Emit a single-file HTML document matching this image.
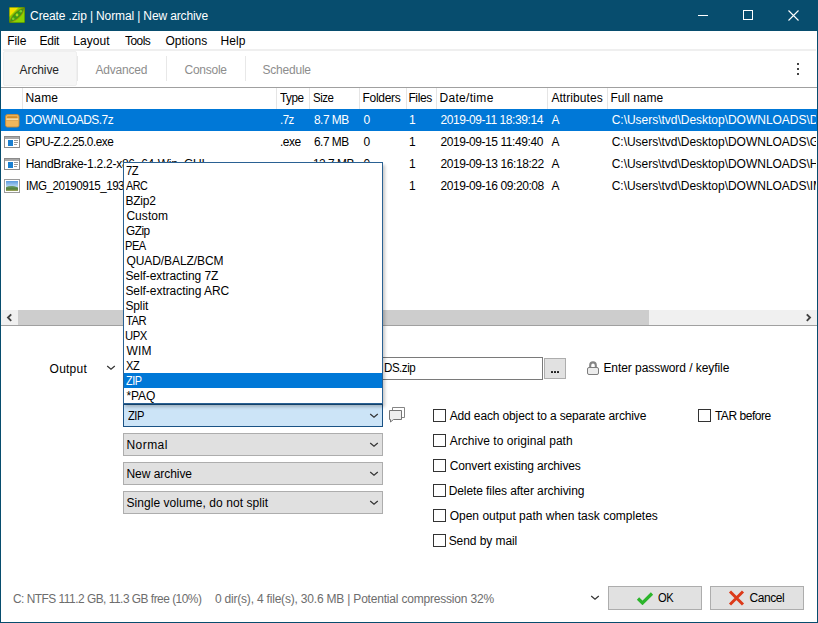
<!DOCTYPE html>
<html><head><meta charset="utf-8">
<style>
*{margin:0;padding:0;box-sizing:border-box}
html,body{width:818px;height:623px;overflow:hidden;background:#fff}
body{position:relative;font-family:"Liberation Sans",sans-serif;font-size:12px;color:#000}
.a{position:absolute;white-space:pre;line-height:14px}
.bx{position:absolute}
</style></head><body>
<div class="bx" style="left:0;top:0;width:818px;height:31px;background:#074d6e"></div>
<div class="bx" style="left:0;top:0;width:1px;height:623px;background:#074d6e"></div>
<div class="bx" style="left:817px;top:0;width:1px;height:623px;background:#074d6e"></div>
<div class="bx" style="left:0;top:622px;width:818px;height:1px;background:#074d6e"></div>
<svg class="bx" style="left:9px;top:7px" width="16" height="16" viewBox="0 0 16 16">
 <rect x="0" y="0" width="16" height="16" fill="#8ad400"/>
 <path d="M0 0H10L0 10Z" fill="#f4e000"/>
 <path d="M0.5 15.5C2 9 7 3 15.5 0.5C14 8 8.5 13.5 0.5 15.5Z" fill="#3d9c12" stroke="#a8780c" stroke-width="0.7"/>
 <circle cx="4.2" cy="11.8" r="1.3" fill="#82cc2a"/><circle cx="8" cy="8" r="1.4" fill="#b2d820"/><circle cx="11.8" cy="4.2" r="1.3" fill="#82cc2a"/>
 <rect x="0.25" y="0.25" width="15.5" height="15.5" fill="none" stroke="#2f6a10" stroke-width="0.5"/>
</svg>
<div class="a" style="left:30.10px;top:9px;letter-spacing:-0.130px;color:#fff">Create .zip | Normal | New archive</div>
<div class="bx" style="left:698px;top:15px;width:10px;height:1px;background:#fff"></div>
<div class="bx" style="left:743px;top:10px;width:10px;height:10px;border:1px solid #fff"></div>
<svg class="bx" style="left:788px;top:10px" width="11" height="11" viewBox="0 0 11 11"><path d="M0.5 0.5L10.5 10.5M10.5 0.5L0.5 10.5" stroke="#fff" stroke-width="1.1"/></svg>
<div class="a" style="left:7.20px;top:34px;letter-spacing:-0.067px;">File</div>
<div class="a" style="left:39.50px;top:34px;letter-spacing:-0.267px;">Edit</div>
<div class="a" style="left:73.30px;top:34px;letter-spacing:0.040px;">Layout</div>
<div class="a" style="left:124.80px;top:34px;letter-spacing:-0.500px;transform:scaleX(0.9923);transform-origin:0 0;">Tools</div>
<div class="a" style="left:165.40px;top:34px;letter-spacing:0.067px;">Options</div>
<div class="a" style="left:220.50px;top:34px;letter-spacing:0.067px;">Help</div>
<div class="bx" style="left:3px;top:49px;width:813px;height:2px;background:#efefef"></div>
<div class="bx" style="left:3px;top:51px;width:74px;height:35px;background:#f6f6f6;border:1px solid #efefef;border-radius:2px"></div>
<div class="bx" style="left:77px;top:56px;width:1px;height:25px;background:#e8e8e8"></div>
<div class="bx" style="left:166px;top:56px;width:1px;height:25px;background:#e8e8e8"></div>
<div class="bx" style="left:245px;top:56px;width:1px;height:25px;background:#e8e8e8"></div>
<div class="a" style="left:19.60px;top:63px;letter-spacing:-0.100px;color:#262626">Archive</div>
<div class="a" style="left:95.50px;top:63px;letter-spacing:-0.214px;color:#8d8d8d">Advanced</div>
<div class="a" style="left:184.50px;top:63px;letter-spacing:-0.250px;color:#8d8d8d">Console</div>
<div class="a" style="left:262.40px;top:63px;letter-spacing:-0.200px;color:#8d8d8d">Schedule</div>
<div class="bx" style="left:797px;top:63px;width:2px;height:2px;background:#444"></div>
<div class="bx" style="left:797px;top:68px;width:2px;height:2px;background:#444"></div>
<div class="bx" style="left:797px;top:73px;width:2px;height:2px;background:#444"></div>
<div class="bx" style="left:1px;top:87px;width:816px;height:1px;background:#a0a0a0"></div>
<div class="bx" style="left:22px;top:88px;width:1px;height:21px;background:#e5e5e5"></div><div class="bx" style="left:276px;top:88px;width:1px;height:21px;background:#e5e5e5"></div><div class="bx" style="left:309px;top:88px;width:1px;height:21px;background:#e5e5e5"></div><div class="bx" style="left:359px;top:88px;width:1px;height:21px;background:#e5e5e5"></div><div class="bx" style="left:406px;top:88px;width:1px;height:21px;background:#e5e5e5"></div><div class="bx" style="left:436px;top:88px;width:1px;height:21px;background:#e5e5e5"></div><div class="bx" style="left:547px;top:88px;width:1px;height:21px;background:#e5e5e5"></div><div class="bx" style="left:607px;top:88px;width:1px;height:21px;background:#e5e5e5"></div>
<div class="a" style="left:25.40px;top:91px;letter-spacing:0.200px;">Name</div>
<div class="a" style="left:280.30px;top:91px;letter-spacing:-0.500px;transform:scaleX(0.9755);transform-origin:0 0;">Type</div>
<div class="a" style="left:312.54px;top:91px;letter-spacing:-0.500px;transform:scaleX(0.9561);transform-origin:0 0;">Size</div>
<div class="a" style="left:362.60px;top:91px;letter-spacing:-0.300px;">Folders</div>
<div class="a" style="left:408.40px;top:91px;letter-spacing:-0.375px;">Files</div>
<div class="a" style="left:439.40px;top:91px;letter-spacing:0.325px;">Date/time</div>
<div class="a" style="left:551.40px;top:91px;letter-spacing:0.067px;">Attributes</div>
<div class="a" style="left:610.50px;top:91px;letter-spacing:0.000px;">Full name</div>
<div class="bx" style="left:1px;top:109px;width:816px;height:22px;background:#0078d7"></div>
<div class="bx" style="left:1px;top:109px;width:275px;height:88px;overflow:hidden"><div class="bx" style="left:-1px;top:0;width:818px;height:88px"><div class="a" style="left:25.41px;top:4px;letter-spacing:-0.500px;transform:scaleX(0.9944);transform-origin:0 0;color:#fff">DOWNLOADS.7z</div><div class="a" style="left:26.40px;top:26px;letter-spacing:-0.500px;transform:scaleX(0.9832);transform-origin:0 0;">GPU-Z.2.25.0.exe</div><div class="a" style="left:25.70px;top:48px;letter-spacing:-0.263px;">HandBrake-1.2.2-x86_64-Win_GUI</div><div class="a" style="left:25.73px;top:70px;letter-spacing:-0.500px;transform:scaleX(0.9670);transform-origin:0 0;">IMG_20190915_193000.jpg</div></div></div><div class="bx" style="left:276px;top:109px;width:33px;height:88px;overflow:hidden"><div class="bx" style="left:-276px;top:0;width:818px;height:88px"><div class="a" style="left:280.04px;top:4px;letter-spacing:-0.500px;transform:scaleX(0.9571);transform-origin:0 0;color:#fff">.7z</div><div class="a" style="left:279.80px;top:26px;letter-spacing:-0.500px;transform:scaleX(0.9951);transform-origin:0 0;">.exe</div><div class="a" style="left:280.80px;top:48px;letter-spacing:-0.500px;transform:scaleX(0.9951);transform-origin:0 0;"></div><div class="a" style="left:279.80px;top:70px;letter-spacing:-0.500px;transform:scaleX(0.9951);transform-origin:0 0;">.jpg</div></div></div><div class="bx" style="left:309px;top:109px;width:50px;height:88px;overflow:hidden"><div class="bx" style="left:-309px;top:0;width:818px;height:88px"><div class="a" style="left:313.50px;top:4px;letter-spacing:-0.500px;transform:scaleX(0.9915);transform-origin:0 0;color:#fff">8.7 MB</div><div class="a" style="left:313.50px;top:26px;letter-spacing:-0.500px;transform:scaleX(0.9915);transform-origin:0 0;">6.7 MB</div><div class="a" style="left:312.51px;top:48px;letter-spacing:-0.500px;transform:scaleX(0.9915);transform-origin:0 0;">12.7 MB</div><div class="a" style="left:313.50px;top:70px;letter-spacing:-0.500px;transform:scaleX(0.9915);transform-origin:0 0;">2.5 MB</div></div></div><div class="bx" style="left:359px;top:109px;width:47px;height:88px;overflow:hidden"><div class="bx" style="left:-359px;top:0;width:818px;height:88px"><div class="a" style="left:363.60px;top:4px;letter-spacing:0.000px;color:#fff">0</div><div class="a" style="left:363.60px;top:26px;letter-spacing:0.000px;">0</div><div class="a" style="left:363.60px;top:48px;letter-spacing:0.000px;">0</div><div class="a" style="left:363.60px;top:70px;letter-spacing:0.000px;">0</div></div></div><div class="bx" style="left:406px;top:109px;width:30px;height:88px;overflow:hidden"><div class="bx" style="left:-406px;top:0;width:818px;height:88px"><div class="a" style="left:409.00px;top:4px;letter-spacing:0.000px;color:#fff">1</div><div class="a" style="left:409.00px;top:26px;letter-spacing:0.000px;">1</div><div class="a" style="left:409.00px;top:48px;letter-spacing:0.000px;">1</div><div class="a" style="left:409.00px;top:70px;letter-spacing:0.000px;">1</div></div></div><div class="bx" style="left:436px;top:109px;width:111px;height:88px;overflow:hidden"><div class="bx" style="left:-436px;top:0;width:818px;height:88px"><div class="a" style="left:440.40px;top:4px;letter-spacing:-0.422px;color:#fff">2019-09-11 18:39:14</div><div class="a" style="left:440.40px;top:26px;letter-spacing:-0.422px;">2019-09-15 11:49:40</div><div class="a" style="left:440.40px;top:48px;letter-spacing:-0.422px;">2019-09-13 16:18:22</div><div class="a" style="left:440.40px;top:70px;letter-spacing:-0.422px;">2019-09-16 09:20:08</div></div></div><div class="bx" style="left:547px;top:109px;width:60px;height:88px;overflow:hidden"><div class="bx" style="left:-547px;top:0;width:818px;height:88px"><div class="a" style="left:551.60px;top:4px;letter-spacing:0.000px;color:#fff">A</div><div class="a" style="left:551.60px;top:26px;letter-spacing:0.000px;">A</div><div class="a" style="left:551.60px;top:48px;letter-spacing:0.000px;">A</div><div class="a" style="left:551.60px;top:70px;letter-spacing:0.000px;">A</div></div></div><div class="bx" style="left:607px;top:109px;width:209px;height:88px;overflow:hidden"><div class="bx" style="left:-607px;top:0;width:818px;height:88px"><div class="a" style="left:611.70px;top:4px;letter-spacing:-0.020px;color:#fff">C:\Users\tvd\Desktop\DOWNLOADS\DOWNLOADS.7z</div><div class="a" style="left:611.70px;top:26px;letter-spacing:-0.020px;">C:\Users\tvd\Desktop\DOWNLOADS\GPU-Z.2.25.0.exe</div><div class="a" style="left:611.70px;top:48px;letter-spacing:-0.020px;">C:\Users\tvd\Desktop\DOWNLOADS\HandBrake-1.2.2-x86_64-Win_GUI.exe</div><div class="a" style="left:611.70px;top:70px;letter-spacing:-0.020px;">C:\Users\tvd\Desktop\DOWNLOADS\IMG_20190915_193000.jpg</div></div></div>
<svg class="bx" style="left:4px;top:113px" width="16" height="15" viewBox="0 0 16 15">
 <rect x="1.6" y="1.6" width="13.4" height="12.4" rx="1.8" fill="#f1b75c" stroke="#c98a34" stroke-width="0.9"/>
 <rect x="3" y="3.2" width="10.5" height="2.2" rx="1" fill="#cf8c2c"/>
 <rect x="2.4" y="5.4" width="11.8" height="1.8" fill="#f7dba6"/>
 <rect x="2.2" y="7.3" width="12.2" height="0.7" fill="#d9a14e"/>
</svg>
<svg class="bx" style="left:4px;top:136px" width="16" height="12" viewBox="0 0 16 12">
 <rect x="0.5" y="0.5" width="15" height="11" fill="#fff" stroke="#8a8a8a"/>
 <rect x="1" y="1" width="14" height="2" fill="#a8a8a8"/>
 <rect x="4" y="4" width="5" height="6" fill="#1a7fd0"/>
 <rect x="10" y="4" width="4" height="1" fill="#9a9a9a"/><rect x="10" y="6" width="4" height="1" fill="#9a9a9a"/><rect x="10" y="8" width="3" height="1" fill="#9a9a9a"/>
</svg>
<svg class="bx" style="left:4px;top:158px" width="16" height="12" viewBox="0 0 16 12">
 <rect x="0.5" y="0.5" width="15" height="11" fill="#fff" stroke="#8a8a8a"/>
 <rect x="1" y="1" width="14" height="2" fill="#a8a8a8"/>
 <rect x="4" y="4" width="5" height="6" fill="#1a7fd0"/>
 <rect x="10" y="4" width="4" height="1" fill="#9a9a9a"/><rect x="10" y="6" width="4" height="1" fill="#9a9a9a"/><rect x="10" y="8" width="3" height="1" fill="#9a9a9a"/>
</svg>
<svg class="bx" style="left:4px;top:179px" width="16" height="14" viewBox="0 0 16 14">
 <defs><linearGradient id="sky" x1="0" y1="0" x2="0" y2="1"><stop offset="0" stop-color="#5b9be0"/><stop offset="0.55" stop-color="#b5d6f2"/><stop offset="1" stop-color="#cfe3f5"/></linearGradient>
 <linearGradient id="gr" x1="0" y1="0" x2="0" y2="1"><stop offset="0" stop-color="#6d9c6a"/><stop offset="0.6" stop-color="#4f7f3a"/><stop offset="1" stop-color="#a8a860"/></linearGradient></defs>
 <rect x="0.5" y="0.5" width="15" height="13" fill="#fff" stroke="#9a9a9a"/>
 <rect x="2" y="2" width="12" height="10" fill="url(#sky)"/>
 <path d="M2 8.2C5 6.8 9 6.6 14 8.5V12H2Z" fill="url(#gr)"/>
</svg>
<div class="bx" style="left:1px;top:310px;width:816px;height:15px;background:#f0f0f0"></div>
<div class="bx" style="left:18px;top:310px;width:631px;height:15px;background:#cdcdcd"></div>
<svg class="bx" style="left:6px;top:313px" width="7" height="9" viewBox="0 0 7 9"><path d="M5.2 1.3L2 4.6L5.2 7.9" fill="none" stroke="#404040" stroke-width="1.9"/></svg>
<svg class="bx" style="left:805px;top:313px" width="7" height="9" viewBox="0 0 7 9"><path d="M1.8 1.3L5 4.6L1.8 7.9" fill="none" stroke="#404040" stroke-width="1.9"/></svg>
<div class="bx" style="left:1px;top:325px;width:816px;height:1px;background:#a0a0a0"></div>

<div class="a" style="left:49.60px;top:362px;letter-spacing:0.220px;">Output</div>
<svg class="bx" style="left:106px;top:364px" width="10" height="7" viewBox="0 0 10 7"><path d="M1.2 2L5 5.3L8.8 2" fill="none" stroke="#333" stroke-width="1.2"/></svg>
<div class="bx" style="left:123px;top:357px;width:420px;height:23px;border:1px solid #7a7a7a;background:#fff"></div>
<div class="a" style="left:383.83px;top:361px;letter-spacing:-0.500px;transform:scaleX(0.9651);transform-origin:0 0;">DS.zip</div>
<div class="bx" style="left:544px;top:358px;width:22px;height:21px;border:1px solid #adadad;background:#e1e1e1"></div>
<div class="bx" style="left:551px;top:371px;width:2px;height:2px;background:#1a1a1a;border-radius:0.5px"></div>
<div class="bx" style="left:554px;top:371px;width:2px;height:2px;background:#1a1a1a;border-radius:0.5px"></div>
<div class="bx" style="left:557px;top:371px;width:2px;height:2px;background:#1a1a1a;border-radius:0.5px"></div>
<svg class="bx" style="left:586px;top:360px" width="14" height="16" viewBox="0 0 14 16">
 <path d="M4.2 7.8V5.2a2.8 2.8 0 0 1 5.6 0V7.8" fill="none" stroke="#858585" stroke-width="2.1"/>
 <rect x="1.5" y="7.5" width="11" height="7" rx="1.5" fill="#ececec" stroke="#7d7d7d"/>
</svg>
<div class="a" style="left:603.40px;top:361px;letter-spacing:-0.061px;">Enter password / keyfile</div>

<div class="bx" style="left:123px;top:404px;width:260px;height:23px;border:1px solid #1a5285;background:#cce4f7"></div>
<div class="bx" style="left:123px;top:433px;width:260px;height:23px;border:1px solid #adadad;background:#e0e0e0"></div>
<div class="bx" style="left:123px;top:462px;width:260px;height:23px;border:1px solid #adadad;background:#e0e0e0"></div>
<div class="bx" style="left:123px;top:491px;width:260px;height:23px;border:1px solid #adadad;background:#e0e0e0"></div>
<div class="a" style="left:127.50px;top:409px;letter-spacing:-0.500px;transform:scaleX(0.9294);transform-origin:0 0;">ZIP</div>
<div class="a" style="left:126.50px;top:438px;letter-spacing:0.440px;">Normal</div>
<div class="a" style="left:126.50px;top:467px;letter-spacing:-0.050px;">New archive</div>
<div class="a" style="left:126.50px;top:496px;letter-spacing:0.054px;">Single volume, do not split</div>
<svg class="bx" style="left:369px;top:412px" width="10" height="7" viewBox="0 0 10 7"><path d="M1.2 2L5 5.3L8.8 2" fill="none" stroke="#333" stroke-width="1.2"/></svg><svg class="bx" style="left:369px;top:441px" width="10" height="7" viewBox="0 0 10 7"><path d="M1.2 2L5 5.3L8.8 2" fill="none" stroke="#333" stroke-width="1.2"/></svg><svg class="bx" style="left:369px;top:470px" width="10" height="7" viewBox="0 0 10 7"><path d="M1.2 2L5 5.3L8.8 2" fill="none" stroke="#333" stroke-width="1.2"/></svg><svg class="bx" style="left:369px;top:499px" width="10" height="7" viewBox="0 0 10 7"><path d="M1.2 2L5 5.3L8.8 2" fill="none" stroke="#333" stroke-width="1.2"/></svg>
<svg class="bx" style="left:388px;top:406px" width="18" height="18" viewBox="0 0 18 18">
 <path d="M4.5 4.2V1.5H16.5V11.5H13.8" fill="#fff" stroke="#777" stroke-width="0.9" stroke-linejoin="round"/>
 <path d="M1.5 4.5H13.5V13.5H5.5L2.5 16V13.5H1.5Z" fill="#eeeeee" stroke="#676767" stroke-width="0.9" stroke-linejoin="round"/>
</svg>
<div class="bx" style="left:433px;top:409px;width:13px;height:13px;border:1px solid #333;background:#fff"></div><div class="bx" style="left:433px;top:434px;width:13px;height:13px;border:1px solid #333;background:#fff"></div><div class="bx" style="left:433px;top:459px;width:13px;height:13px;border:1px solid #333;background:#fff"></div><div class="bx" style="left:433px;top:484px;width:13px;height:13px;border:1px solid #333;background:#fff"></div><div class="bx" style="left:433px;top:509px;width:13px;height:13px;border:1px solid #333;background:#fff"></div><div class="bx" style="left:433px;top:534px;width:13px;height:13px;border:1px solid #333;background:#fff"></div><div class="bx" style="left:698px;top:409px;width:13px;height:13px;border:1px solid #333;background:#fff"></div>
<div class="a" style="left:449.70px;top:409px;letter-spacing:-0.133px;">Add each object to a separate archive</div>
<div class="a" style="left:449.70px;top:434px;letter-spacing:0.039px;">Archive to original path</div>
<div class="a" style="left:449.70px;top:459px;letter-spacing:-0.121px;">Convert existing archives</div>
<div class="a" style="left:448.70px;top:484px;letter-spacing:-0.085px;">Delete files after archiving</div>
<div class="a" style="left:449.70px;top:509px;letter-spacing:0.000px;">Open output path when task completes</div>
<div class="a" style="left:448.70px;top:534px;letter-spacing:-0.073px;">Send by mail</div>
<div class="a" style="left:714.90px;top:409px;letter-spacing:-0.467px;">TAR before</div>

<div class="bx" style="left:123px;top:162px;width:260px;height:242px;border:1px solid #2a6193;background:#fff;box-shadow:2px 3px 3px rgba(0,0,0,0.22)">
 <div style="position:absolute;left:0;top:210px;width:258px;height:15px;background:#0078d7"></div>
</div>
<div class="a" style="left:126.40px;top:164px;letter-spacing:-0.500px;transform:scaleX(0.9333);transform-origin:0 0;">7Z</div>
<div class="a" style="left:126.40px;top:179px;letter-spacing:-0.500px;transform:scaleX(0.9000);transform-origin:0 0;">ARC</div>
<div class="a" style="left:125.40px;top:194px;letter-spacing:-0.175px;">BZip2</div>
<div class="a" style="left:126.40px;top:209px;letter-spacing:0.060px;">Custom</div>
<div class="a" style="left:126.40px;top:224px;letter-spacing:-0.500px;transform:scaleX(0.9837);transform-origin:0 0;">GZip</div>
<div class="a" style="left:125.48px;top:239px;letter-spacing:-0.500px;transform:scaleX(0.9227);transform-origin:0 0;">PEA</div>
<div class="a" style="left:126.40px;top:254px;letter-spacing:-0.067px;">QUAD/BALZ/BCM</div>
<div class="a" style="left:125.40px;top:269px;letter-spacing:-0.065px;">Self-extracting 7Z</div>
<div class="a" style="left:125.40px;top:284px;letter-spacing:-0.050px;">Self-extracting ARC</div>
<div class="a" style="left:125.40px;top:299px;letter-spacing:-0.100px;">Split</div>
<div class="a" style="left:126.40px;top:314px;letter-spacing:-0.500px;transform:scaleX(0.9364);transform-origin:0 0;">TAR</div>
<div class="a" style="left:125.46px;top:329px;letter-spacing:-0.500px;transform:scaleX(0.9391);transform-origin:0 0;">UPX</div>
<div class="a" style="left:126.40px;top:344px;letter-spacing:0.250px;">WIM</div>
<div class="a" style="left:126.40px;top:359px;letter-spacing:-0.500px;transform:scaleX(0.9172);transform-origin:0 0;">XZ</div>
<div class="a" style="left:126.40px;top:374px;letter-spacing:-0.500px;transform:scaleX(0.9059);transform-origin:0 0;color:#fff">ZIP</div>
<div class="a" style="left:126.40px;top:389px;letter-spacing:-0.100px;">*PAQ</div>

<div class="a" style="left:13.40px;top:592px;letter-spacing:-0.500px;transform:scaleX(0.9911);transform-origin:0 0;color:#6d6d6d">C: NTFS 111.2 GB, 11.3 GB free (10%)</div>
<div class="a" style="left:214.90px;top:592px;letter-spacing:-0.195px;color:#6d6d6d">0 dir(s), 4 file(s), 30.6 MB | Potential compression 32%</div>
<svg class="bx" style="left:590px;top:594px" width="10" height="7" viewBox="0 0 10 7"><path d="M1.2 2L5 5.3L8.8 2" fill="none" stroke="#333" stroke-width="1.2"/></svg>
<div class="bx" style="left:608px;top:586px;width:94px;height:24px;border:1px solid #adadad;background:#e1e1e1"></div>
<svg class="bx" style="left:636px;top:591px" width="18" height="14" viewBox="0 0 18 14"><path d="M2 7.5L6.5 12L16 2.5" fill="none" stroke="#2cb52c" stroke-width="3.2"/></svg>
<div class="bx" style="left:710px;top:586px;width:94px;height:24px;border:1px solid #adadad;background:#e1e1e1"></div>
<svg class="bx" style="left:728px;top:590px" width="17" height="16" viewBox="0 0 17 16"><path d="M2 1.5L15 14.5M15 1.5L2 14.5" fill="none" stroke="#dc3a1a" stroke-width="3"/></svg>
<div class="a" style="left:657.80px;top:591px;letter-spacing:-0.500px;transform:scaleX(0.9273);transform-origin:0 0;">OK</div>
<div class="a" style="left:749.50px;top:591px;letter-spacing:-0.460px;">Cancel</div>
</body></html>
